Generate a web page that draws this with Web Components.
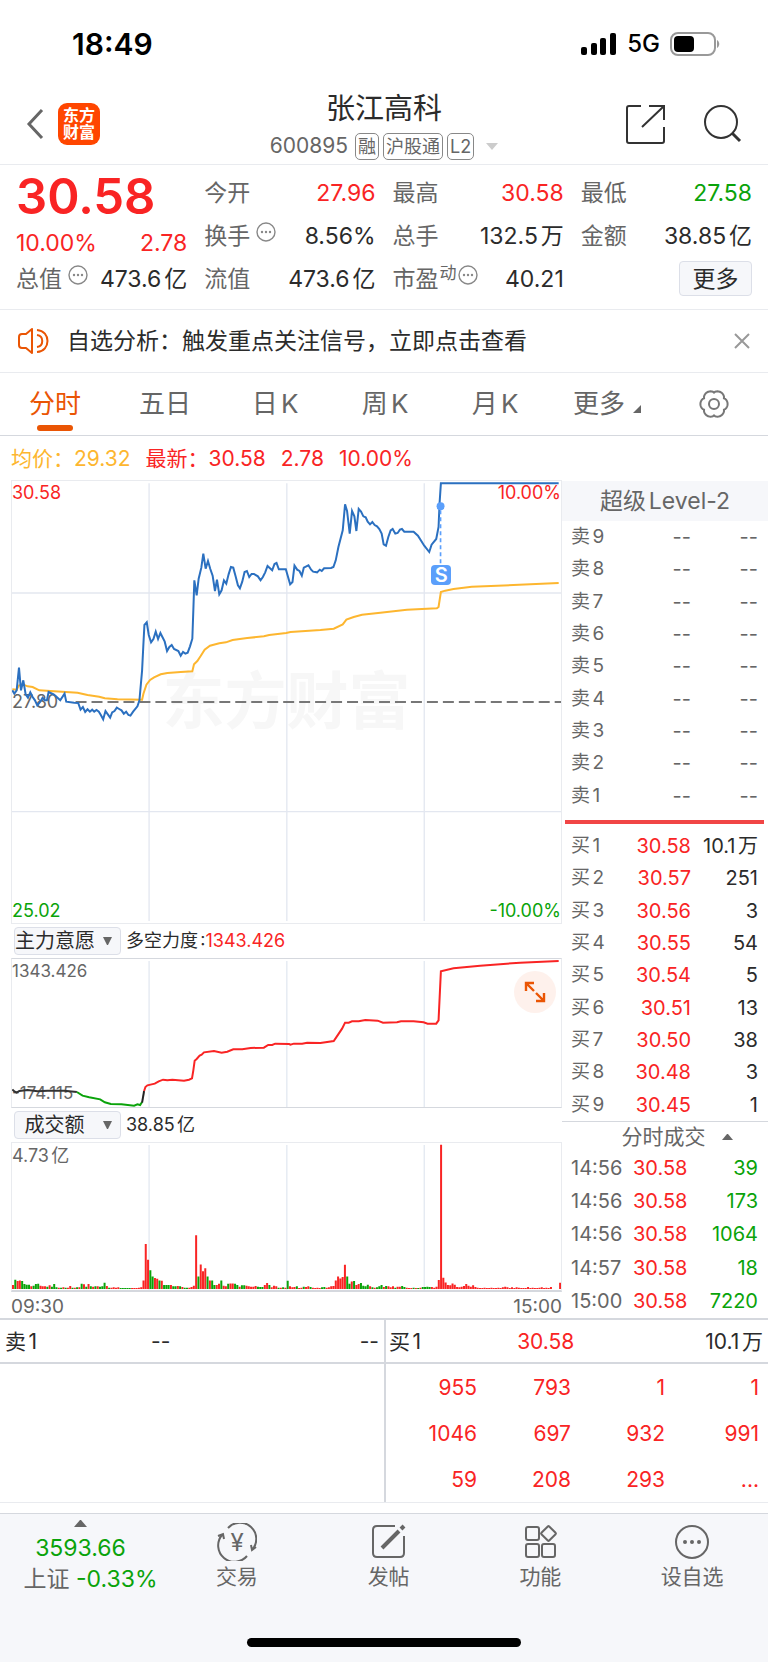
<!DOCTYPE html>
<html lang="zh-CN">
<head>
<meta charset="utf-8">
<meta name="viewport" content="width=device-width, initial-scale=1">
<title>张江高科 600895</title>
<style>
    :root {
        --red: #f92424;
        --green: #0aa30a;
        --orange: #ea5504;
        --yellow: #fdb62f;
        --ink: #2b2b2b;
        --grey: #666;
        --line: #e9ebef;
        --line-dark: #d5d8de;
        --panel: #f6f7fa;
    }
    body {
        margin: 0;
        background: #fff;
        color: var(--ink);
        font-family: Inter, "Noto Sans CJK SC", sans-serif;
        font-size: 23px;
        line-height: 32px;
        text-autospace: normal;
    }
</style>
</head>
<body>
<stock-app></stock-app>

<script>
class StatusBar extends HTMLElement {

    constructor() {
        super();
        this.attachShadow({mode: 'open'});
        this.render();
    }

    render() {
        this.shadowRoot.innerHTML = `
        <style>
            :host {
                display: flex;
                align-items: center;
                justify-content: space-between;
                height: 88px;
                padding: 0 48px 0 72px;
                color: #000;
            }
            time { font-size: 30px; font-weight: 600; }
            .right { display: flex; align-items: center; gap: 10px; font-weight: 500; font-size: 24px; }
            svg { display: block; }
        </style>
        <time>18:49</time>
        <div class="right">
            <svg width="36" height="24" viewBox="0 0 36 24">
                <rect x="0" y="15" width="6" height="8" rx="2"/>
                <rect x="10" y="11" width="6" height="12" rx="2"/>
                <rect x="19" y="6" width="6" height="17" rx="2"/>
                <rect x="29" y="1" width="6" height="22" rx="2"/>
            </svg>
            <span>5G</span>
            <svg width="50" height="24" viewBox="0 0 50 24">
                <rect x="1" y="1" width="44" height="22" rx="7" fill="none" stroke="#999" stroke-width="2"/>
                <rect x="4" y="4" width="20" height="16" rx="4"/>
                <path d="M47 8c3 2 3 6 0 8z" fill="#999"/>
            </svg>
        </div>`;
    }
}
customElements.define('status-bar', StatusBar);


class StockHeader extends HTMLElement {

    constructor() {
        super();
        this.attachShadow({mode: 'open'});
        this.render();
    }

    render() {
        this.shadowRoot.innerHTML = `
        <style>
            :host {
                display: grid;
                grid-template-columns: 1fr auto 1fr;
                align-items: center;
                height: 76px;
                padding: 0 26px;
                border-bottom: 1px solid var(--line);
            }
            button, a { background: none; border: 0; padding: 0; color: inherit; display: block; text-decoration: none; }
            svg { display: block; fill: none; }
            .left, .tools { display: flex; align-items: center; margin-bottom: 4px; }
            .left { gap: 14px; }
            .tools { justify-content: flex-end; gap: 37px; }
            .logo {
                width: 42px;
                height: 42px;
                box-sizing: border-box;
                padding-top: 4px;
                border-radius: 9px;
                background: #ff4600;
                color: #fff;
                text-align: center;
                font-size: 16px;
                font-weight: 700;
                line-height: 17px;
            }
            .mid { text-align: center; }
            h1 { margin: 0; font-size: 29px; font-weight: 400; line-height: 40px; }
            .sub { display: flex; align-items: center; justify-content: center; gap: 4px; color: var(--grey); font-size: 21px; line-height: 34px; }
            .sub i {
                font-style: normal;
                font-size: 18px;
                line-height: 25px;
                padding: 0 2px;
                border: 1px solid #888;
                border-radius: 5px;
            }
            .sub i:first-of-type { margin-left: 3px; }
            .sub svg { margin-left: 8px; }
        </style>
        <div class="left">
            <button type="button" aria-label="返回">
                <svg width="18" height="32" viewBox="0 0 18 32"><path d="M16 2L3 16l13 14" stroke="#666" stroke-width="3"/></svg>
            </button>
            <a class="logo" href="#home">东方<br>财富</a>
        </div>
        <div class="mid">
            <h1>张江高科</h1>
            <div class="sub"><span>600895</span><i>融</i><i>沪股通</i><i>L2</i><svg width="12" height="7" viewBox="0 0 12 7"><path d="M0 0h12L6 7z" fill="#ccc"/></svg></div>
        </div>
        <div class="tools">
            <button type="button" aria-label="分享">
                <svg width="40" height="40" viewBox="0 0 40 40" stroke="#333" stroke-width="2">
                    <path d="M16 2H4q-2 0-2 2v33q0 2 2 2h33q2 0 2-2V23M24 2h15v14M17 23L38 3"/>
                </svg>
            </button>
            <button type="button" aria-label="搜索">
                <svg width="40" height="40" viewBox="0 0 40 40" stroke="#333" stroke-width="2">
                    <circle cx="19" cy="18" r="16"/><path d="M30 29l8 8" stroke-width="3"/>
                </svg>
            </button>
        </div>`;
    }
}
customElements.define('stock-header', StockHeader);


// one label / value pair, the label may carry a small hint icon
class QuoteCell extends HTMLElement {

    constructor() {
        super();
        this.attachShadow({mode: 'open'});
        this.render();
    }

    render() {
        const hint = this.hasAttribute('hint')
            ? '<svg width="20" height="20" viewBox="0 0 20 20"><circle cx="10" cy="10" r="9" fill="none" stroke="#888" stroke-width="1.4"/><circle cx="6" cy="10" r="1.2"/><circle cx="10" cy="10" r="1.2"/><circle cx="14" cy="10" r="1.2"/></svg>'
            : '';
        const sup = this.getAttribute('sup') || '';
        this.shadowRoot.innerHTML = `
        <style>
            :host { display: flex; justify-content: space-between; align-items: center; white-space: nowrap; }
            .label { display: flex; color: var(--grey); }
            small { font-size: 17px; line-height: 20px; margin-left: 1px; }
            svg { display: block; margin-left: 6px; margin-top: 2px; fill: #888; }
            small + svg { margin-left: 1px; }
        </style>
        <span class="label">${this.getAttribute('label')}${sup ? '<small>' + sup + '</small>' : ''}${hint}</span>
        <slot></slot>`;
    }
}
customElements.define('quote-cell', QuoteCell);


class QuoteBoard extends HTMLElement {

    constructor() {
        super();
        this.attachShadow({mode: 'open'});
        this.render();
    }

    render() {
        this.shadowRoot.innerHTML = `
        <style>
            :host {
                display: grid;
                grid-template-columns: repeat(4, 1fr);
                grid-template-rows: repeat(3, 43px);
                column-gap: 17px;
                padding: 6px 16px 9px;
                border-bottom: 1px solid var(--line);
            }
            .price {
                grid-row: span 2;
                color: var(--red);
            }
            .price b { display: block; font-size: 49px; font-weight: 600; line-height: 52px; white-space: nowrap; }
            .price div { display: flex; justify-content: space-between; line-height: 40px; }
            .up { color: var(--red); }
            .down { color: var(--green); }
            button {
                justify-self: end;
                align-self: center;
                width: 73px;
                height: 35px;
                padding: 0;
                font: inherit;
                line-height: 32px;
                color: inherit;
                background: var(--panel);
                border: 1px solid #dcdfe8;
                border-radius: 4px;
            }
        </style>
        <div class="price"><b>30.58</b><div><span>10.00%</span><span>2.78</span></div></div>
        <quote-cell label="今开"><span class="up">27.96</span></quote-cell>
        <quote-cell label="最高"><span class="up">30.58</span></quote-cell>
        <quote-cell label="最低"><span class="down">27.58</span></quote-cell>
        <quote-cell label="换手" hint>8.56%</quote-cell>
        <quote-cell label="总手">132.5万</quote-cell>
        <quote-cell label="金额">38.85亿</quote-cell>
        <quote-cell label="总值" hint>473.6亿</quote-cell>
        <quote-cell label="流值">473.6亿</quote-cell>
        <quote-cell label="市盈" sup="动" hint>40.21</quote-cell>
        <button type="button">更多</button>`;
    }
}
customElements.define('quote-board', QuoteBoard);


class NoticeBar extends HTMLElement {

    constructor() {
        super();
        this.attachShadow({mode: 'open'});
        this.render();
    }

    render() {
        this.shadowRoot.innerHTML = `
        <style>
            :host {
                display: flex;
                align-items: center;
                height: 62px;
                padding: 0 17px;
                border-bottom: 1px solid var(--line);
            }
            svg { display: block; fill: none; }
            a { flex: 1; margin-left: 18px; color: inherit; text-decoration: none; }
            button { background: none; border: 0; padding: 0; }
        </style>
        <svg width="32" height="28" viewBox="0 0 32 28" stroke="#ea5504" stroke-width="2">
            <path d="M15 2v24l-6-5H5q-3 0-3-3v-8q0-3 3-3h4z" stroke-linejoin="round"/>
            <path d="M20 8c7 1 7 11 0 12M20 3c14 1 14 21 0 22"/>
        </svg>
        <a href="#analysis">自选分析：触发重点关注信号，立即点击查看</a>
        <button type="button" aria-label="关闭">
            <svg width="18" height="18" viewBox="0 0 18 18" stroke="#999" stroke-width="2"><path d="M2 2l14 14M16 2L2 16"/></svg>
        </button>`;
    }
}
customElements.define('notice-bar', NoticeBar);


class PeriodTabs extends HTMLElement {

    constructor() {
        super();
        this.attachShadow({mode: 'open'});
        this.render();
    }

    // outline of the settings wheel: six broad bumps, narrow notches between them
    gear() {
        const pts = [];
        for (let a = 0; a < 360; a += 5) {
            const t = a * Math.PI / 180;
            const r = 11.4 + 2.2 * Math.pow(Math.abs(Math.cos(3 * t)), 0.7);
            pts.push((15 + r * Math.cos(t)).toFixed(2) + ',' + (15 + r * Math.sin(t)).toFixed(2));
        }
        return pts.join(' ');
    }

    render() {
        const tabs = ['分时', '五日', '日K', '周K', '月K'];
        this.shadowRoot.innerHTML = `
        <style>
            :host {
                display: grid;
                grid-template-columns: repeat(6, 1fr) 108px;
                height: 62px;
                border-bottom: 1px solid var(--line-dark);
            }
            button {
                position: relative;
                background: none;
                border: 0;
                padding: 0;
                font: inherit;
                font-size: 26px;
                color: var(--grey);
                white-space: nowrap;
                text-autospace: normal;
            }
            .on { color: var(--orange); }
            .on::after {
                content: "";
                position: absolute;
                left: calc(50% - 18px);
                bottom: 4px;
                width: 36px;
                height: 6px;
                border-radius: 3px;
                background: var(--orange);
            }
            .more { padding-left: 4px; }
            svg { fill: none; }
            .wheel { display: block; margin: auto; stroke-linejoin: round; }
            .corner { margin-left: 8px; }
        </style>
        ${tabs.map((t, i) => `<button type="button"${i === 0 ? ' class="on"' : ''}>${t}</button>`).join('')}
        <button type="button" class="more">更多<svg class="corner" width="8" height="8" viewBox="0 0 8 8"><path d="M8 0v8H0z" fill="#666"/></svg></button>
        <button type="button" aria-label="设置">
            <svg class="wheel" width="30" height="30" viewBox="0 0 30 30" stroke="#777" stroke-width="2"><polygon points="${this.gear()}"/><circle cx="15" cy="15" r="5"/></svg>
        </button>`;
    }
}
customElements.define('period-tabs', PeriodTabs);


class PriceChart extends HTMLElement {

    constructor() {
        super();
        this.attachShadow({mode: 'open'});
        this.render();
    }

    render() {
        const price = '34,660 40,670 47,660 54,592 60,660 67,630 74,672 81,682 88,666 95,680 102,690 109,705 118,694 125,682 132,690 138,690 143,665 158,672 165,678 178,690 191,670 196,694 220,697 232,698 239,718 246,710 253,725 260,717 267,724 274,718 280,724 287,719 294,724 300,734 307,747 314,722 321,732 328,742 334,726 341,722 348,712 355,716 362,720 369,730 376,724 383,734 389,736 397,724 410,708 416,690 424,600 428,520 431,464 438,456 444,494 451,516 458,506 465,484 472,506 479,488 485,500 492,514 499,542 506,530 513,524 520,536 533,542 540,556 547,545 554,550 561,547 568,528 575,505 578,420 581,330 588,375 594,325 602,292 608,250 615,295 622,272 629,296 636,316 643,362 649,328 656,372 663,360 670,330 677,340 684,312 691,290 698,292 705,318 712,345 718,354 725,334 732,305 739,302 746,320 753,311 760,311 772,318 780,330 787,320 794,306 801,287 815,300 822,281 828,278 835,297 856,297 862,318 869,342 876,335 882,286 890,298 897,302 904,316 910,292 924,285 932,298 938,304 950,306 958,298 964,302 971,294 992,293 999,290 1006,270 1014,230 1027,180 1034,102 1040,122 1048,190 1055,122 1062,138 1068,182 1075,116 1082,124 1089,138 1096,141 1102,154 1109,162 1116,155 1123,164 1130,168 1137,176 1144,190 1150,222 1157,226 1164,200 1171,180 1177,176 1185,190 1192,188 1199,178 1205,176 1212,184 1240,184 1253,196 1272,226 1287,245 1294,223 1308,206 1315,170 1318,100 1322,39 1676,39';
        const average = '34,657 47,658 54,645 68,643 80,648 95,650 115,660 160,663 230,667 260,674 295,679 312,684 350,687 424,688 428,670 437,643 448,629 460,621 480,612 500,608 540,605 575,603 580,582 590,572 600,557 612,538 628,526 656,519 676,516 696,509 740,503 790,498 806,494 857,488 870,485 960,479 1000,475 1027,462 1038,448 1060,440 1085,433 1140,427 1220,418 1310,414 1315,410 1322,365 1335,361 1360,356 1415,349 1540,344 1676,338';
        this.shadowRoot.innerHTML = `
        <style>
            :host {
                display: block;
                position: relative;
                height: 442px;
                border: 1px solid var(--line);
                font-size: 18px;
                line-height: 24px;
            }
            .mark {
                position: absolute;
                inset: 0 25% 0 25%;
                display: flex;
                align-items: center;
                justify-content: center;
                font-size: 62px;
                font-weight: 700;
                white-space: nowrap;
                color: #f7f7f7;
            }
            svg { position: absolute; inset: 0; width: 100%; height: 100%; fill: none; }
            .tag { position: absolute; }
            .t { top: 0; }
            .c { top: calc(50% - 12px); color: var(--grey); }
            .b { bottom: 0; }
            .l { left: 0; }
            .r { right: 0; }
            .up { color: var(--red); }
            .down { color: var(--green); }
            .sell {
                position: absolute;
                left: calc(78% - 9px);
                top: 84px;
                width: 20px;
                height: 20px;
                border-radius: 4px;
                background: #5b9ffb;
                color: #fff;
                font-size: 20px;
                font-weight: 600;
                line-height: 20px;
                text-align: center;
            }
        </style>
        <div class="mark">东方财富</div>
        <span class="tag c l">27.80</span>
        <svg viewBox="33 32 1650 1326" preserveAspectRatio="none">
            <path d="M445 39V1352M859 39V1352M1272 39V1352M33 368H1683M33 1024H1683" stroke="#e3e7f0" stroke-width="4"/>
            <path d="M224 695H1683" stroke="#777" stroke-width="6" stroke-dasharray="33 15"/>
            <polyline points="${average}" stroke="#fdb62f" stroke-width="6"/>
            <polyline points="${price}" stroke="#2b70c0" stroke-width="6"/>
            <path d="M1321 120V285" stroke="#5b9ffb" stroke-width="5" stroke-dasharray="12 9"/>
            <circle cx="1321" cy="108" r="12" fill="#5b9ffb"/>
        </svg>
        <span class="tag t l up">30.58</span>
        <span class="tag t r up">10.00%</span>
        <span class="tag b l down">25.02</span>
        <span class="tag b r down">-10.00%</span>
        <span class="sell">S</span>`;
    }
}
customElements.define('price-chart', PriceChart);


// title row of a sub chart: drop-down and current value
class IndicatorHead extends HTMLElement {

    constructor() {
        super();
        this.attachShadow({mode: 'open'});
        this.render();
    }

    render() {
        const name = this.getAttribute('name');
        this.shadowRoot.innerHTML = `
        <style>
            :host { display: flex; align-items: center; height: 34px; padding-left: 3px; font-size: 18px; }
            label { position: relative; display: block; margin-right: 5px; }
            select {
                appearance: none;
                display: block;
                width: 107px;
                height: 28px;
                padding: 0 26px 0 0;
                font: inherit;
                font-size: 20px;
                line-height: 26px;
                text-align: center;
                text-align-last: center;
                color: inherit;
                background: var(--panel);
                border: 1px solid #dcdfe8;
                border-radius: 4px;
            }
            svg { position: absolute; right: 9px; top: 10px; }
        </style>
        <label>
            <select aria-label="指标"><option>${name}</option></select>
            <svg width="9" height="8" viewBox="0 0 9 8"><path d="M0 0h9L5 8H4z" fill="#666"/></svg>
        </label>
        <slot></slot>`;
    }
}
customElements.define('indicator-head', IndicatorHead);


class ForceChart extends HTMLElement {

    constructor() {
        super();
        this.attachShadow({mode: 'open'});
        this.render();
    }

    render() {
        this.shadowRoot.innerHTML = `
        <style>
            :host {
                display: block;
                position: relative;
                height: 148px;
                border: 1px solid var(--line-dark);
                border-left-color: var(--line);
                border-right-color: var(--line);
                color: var(--grey);
                font-size: 17px;
                line-height: 24px;
            }
            svg { display: block; fill: none; }
            .plot { position: absolute; inset: 0; width: 100%; height: 100%; }
            .tag { position: absolute; left: 0; }
            .t { top: 0; }
            .b { bottom: 2px; }
            button {
                position: absolute;
                right: 5px;
                top: 12px;
                width: 42px;
                height: 42px;
                padding: 10px;
                border: 0;
                border-radius: 50%;
                background: #fef1ec;
            }
        </style>
        <span class="tag t">1343.426</span>
        <span class="tag b">-174.115</span>
        <svg class="plot" viewBox="33 116 1650 444" preserveAspectRatio="none">
            <path d="M445 122V560M859 122V560M1272 122V560" stroke="#e3e9f1" stroke-width="4"/>
            <g stroke-width="6">
                <polyline stroke="#333" points="34,507 40,513 47,517 55,512 80,509 110,513 140,511 190,511 228,515"/>
                <polyline stroke="#0aa30a" points="228,515 245,526 265,531 298,537 312,546 330,551 362,552 400,556 410,552 418,554 424,545"/>
                <polyline stroke="#222" points="424,547 430,512"/>
                <polyline stroke="#f92424" points="430,512 434,500 440,495 462,490 474,483 487,478 500,480 515,478 550,481 565,478 574,474 578,450 582,421 588,416 597,406 603,403 610,396 640,392 663,397 680,394 698,387 725,387 750,383 790,382 803,374 815,374 824,370 866,371 870,373 880,370 905,370 920,367 960,368 1000,362 1015,340 1025,325 1034,307 1045,307 1055,303 1075,303 1095,299 1132,301 1148,307 1190,306 1202,303 1240,303 1270,306 1282,310 1308,310 1315,300 1322,153 1360,144 1440,136 1560,127 1676,122"/>
            </g>
        </svg>
        <button type="button" aria-label="展开">
            <svg width="22" height="22" viewBox="0 0 22 22" stroke="#ea5504" stroke-width="2.4"><path d="M2 10V2h8M2 2l8 8M20 12v8h-8M20 20l-8-8"/></svg>
        </button>`;
    }
}
customElements.define('force-chart', ForceChart);


class VolumeChart extends HTMLElement {

    constructor() {
        super();
        this.attachShadow({mode: 'open'});
        this.render();
    }

    // one bar per minute, below zero means a falling minute
    bars() {
        const data = [
            12,-28,24,26,-24,-15,-13,-13,8,-10, -15,-16,10,8,8,-7,11,-7,-15,-5,
            4,-4,5,-4,4,9,-4,4,-5,5, -16,14,-7,15,-8,7,-8,8,-7,-8,
            -19,9,-4,4,5,4,5,-3,-3,-3, -3,-3,3,3,3,4,5,26,136,88,
            -57,-38,33,31,-26,25,-12,-12,-12,12, -8,-8,9,-8,6,-4,-4,4,6,10,
            162,-38,74,54,63,-38,26,-26,-12,12, 16,-26,10,8,-16,17,17,-16,-12,7,
            -11,-11,10,8,7,7,9,-7,-6,-6, 12,18,-12,5,10,8,-4,4,-5,4,
            -25,8,5,6,-8,3,4,-7,6,8, -6,4,3,4,3,-5,-6,4,5,8,
            9,26,38,32,36,73,-38,-16,23,-24, 12,15,-18,-10,-8,-13,8,-5,4,-5,
            -8,-12,6,-9,8,5,8,-4,7,7, -9,-6,4,3,3,-4,3,-3,4,-6,
            -6,-7,-6,6,4,7,27,436,34,20, 12,11,17,13,6,5,7,9,15,10,
            7,11,6,4,3,3,4,3,3,4, 3,3,4,3,5,7,5,3,5,3,
            5,4,3,3,3,6,3,4,3,3, 4,5,3,4,3,6,0,0,0,19
        ];
        const path = sign => data.map((v, i) => v * sign > 0
            ? `M${(36 + i * 6.88).toFixed(1)} 1109v${-Math.abs(v)}` : '').join('');
        return `<path d="${path(1)}" stroke="#f92424"/><path d="${path(-1)}" stroke="#0aa30a"/>`;
    }

    render() {
        this.shadowRoot.innerHTML = `
        <style>
            :host { display: block; color: var(--grey); font-size: 19px; }
            .box {
                position: relative;
                height: 147px;
                border: 1px solid var(--line);
                border-bottom: 2px solid var(--line-dark);
            }
            svg { position: absolute; inset: 0; width: 100%; height: 100%; }
            .tag { position: absolute; left: 0; top: 0; line-height: 26px; font-size: 18px; }
            .axis { display: flex; justify-content: space-between; height: 26px; line-height: 29px; }
        </style>
        <div class="box">
            <svg viewBox="33 668 1650 444" preserveAspectRatio="none">
                <path d="M445 674V1111M859 674V1111M1272 674V1111" stroke="#e3e9f1" stroke-width="4"/>
                <g stroke-width="6">${this.bars()}</g>
            </svg>
            <span class="tag">4.73亿</span>
        </div>
        <div class="axis"><span>09:30</span><span>15:00</span></div>`;
    }
}
customElements.define('volume-chart', VolumeChart);


class ChartPanel extends HTMLElement {

    constructor() {
        super();
        this.attachShadow({mode: 'open'});
        this.render();
    }

    render() {
        this.shadowRoot.innerHTML = `
        <style>
            :host { display: block; padding-left: 11px; }
            .up { color: var(--red); }
        </style>
        <price-chart></price-chart>
        <indicator-head name="主力意愿"><span>多空力度:<span class="up">1343.426</span></span></indicator-head>
        <force-chart></force-chart>
        <indicator-head name="成交额">38.85亿</indicator-head>
        <volume-chart></volume-chart>`;
    }
}
customElements.define('chart-panel', ChartPanel);


class OrderBook extends HTMLElement {

    constructor() {
        super();
        this.attachShadow({mode: 'open'});
        this.render();
    }

    render() {
        const sells = [9, 8, 7, 6, 5, 4, 3, 2, 1].map(n => ['卖' + n, '--', '--']);
        const buys = [
            ['买1', '30.58', '10.1万'],
            ['买2', '30.57', '251'],
            ['买3', '30.56', '3'],
            ['买4', '30.55', '54'],
            ['买5', '30.54', '5'],
            ['买6', '30.51', '13'],
            ['买7', '30.50', '38'],
            ['买8', '30.48', '3'],
            ['买9', '30.45', '1']
        ];
        const deals = [
            ['14:56', '30.58', '39'],
            ['14:56', '30.58', '173'],
            ['14:56', '30.58', '1064'],
            ['14:57', '30.58', '18'],
            ['15:00', '30.58', '7220']
        ];
        const table = (rows, name) => `<table class="${name}">${rows.map(r =>
            `<tr><th scope="row">${r[0]}</th><td>${r[1]}</td><td>${r[2]}</td></tr>`).join('')}</table>`;

        this.shadowRoot.innerHTML = `
        <style>
            :host { display: block; font-size: 19px; line-height: 24px; }
            h2 { margin: 0; font-weight: 400; color: var(--grey); text-align: center; }
            .level { margin: 1px 0 0; font-size: 23px; line-height: 40px; background: var(--panel); }
            table { width: 100%; border-collapse: collapse; table-layout: fixed; text-autospace: normal; }
            th, td { padding: 0; font-weight: 400; white-space: nowrap; }
            th { width: 62px; padding-left: 9px; text-align: left; color: var(--grey); }
            td { text-align: right; font-size: 20px; }
            td:nth-child(2) { width: 58px; color: var(--red); }
            td:nth-child(3) { padding-right: 10px; }
            .sells, .buys { height: 291px; }
            .sells td { color: var(--grey); }
            .sells td:nth-child(2) { color: var(--grey); }
            .deals { height: 167px; }
            .deals th { font-size: 20px; }
            .deals td:nth-child(2) { width: 52px; }
            .deals td:nth-child(3) { color: var(--green); }
            hr { margin: 8px 4px 6px 3px; border: 0; height: 4px; background: #f14545; }
            .list { display: flex; justify-content: center; align-items: center; gap: 16px; padding-left: 24px; font-size: 21px; line-height: 29px; border-top: 1px solid var(--line-dark); }
        </style>
        <h2 class="level">超级Level-2</h2>
        ${table(sells, 'sells')}
        <hr>
        ${table(buys, 'buys')}
        <h2 class="list">分时成交<svg width="11" height="6" viewBox="0 0 11 6"><path d="M0 6L5 0h1l5 6z" fill="#666"/></svg></h2>
        ${table(deals, 'deals')}`;
    }
}
customElements.define('order-book', OrderBook);


class QueuePanel extends HTMLElement {

    constructor() {
        super();
        this.attachShadow({mode: 'open'});
        this.render();
    }

    render() {
        const queue = [
            ['955', '793', '1', '1'],
            ['1046', '697', '932', '991'],
            ['59', '208', '293', '...']
        ];
        this.shadowRoot.innerHTML = `
        <style>
            :host {
                display: grid;
                grid-template-columns: 1fr 1fr;
                border-top: 2px solid var(--line-dark);
                border-bottom: 1px solid var(--line);
                margin-bottom: 10px;
                font-size: 21px;
            }
            section + section { box-shadow: inset 2px 0 var(--line-dark); }
            .top {
                display: grid;
                grid-template-columns: 1fr 1fr 1fr;
                line-height: 40px;
                padding: 2px 5px 0;
                border-bottom: 2px solid var(--line-dark);
            }
            .top span + span { text-align: right; }
            .top span:nth-child(2) { padding-right: 84px; margin-left: -84px; }
            .buy .top span:nth-child(2) { padding-right: 64px; color: var(--red); }
            table { width: 100%; border-collapse: collapse; table-layout: fixed; color: var(--red); }
            td { padding: 2px 9px 0 0; height: 44px; text-align: right; }
            td:first-child { width: 93px; }
        </style>
        <section><div class="top"><span>卖1</span><span>--</span><span>--</span></div></section>
        <section class="buy">
            <div class="top"><span>买1</span><span>30.58</span><span>10.1万</span></div>
            <table>${queue.map(r => `<tr>${r.map(v => `<td>${v}</td>`).join('')}</tr>`).join('')}</table>
        </section>`;
    }
}
customElements.define('queue-panel', QueuePanel);


class ToolButton extends HTMLElement {

    constructor() {
        super();
        this.attachShadow({mode: 'open'});
        this.render();
    }

    render() {
        this.shadowRoot.innerHTML = `
        <style>
            :host { display: block; }
            button {
                display: flex;
                flex-direction: column;
                align-items: center;
                width: 100%;
                padding: 9px 0 0;
                border: 0;
                background: none;
                font: inherit;
                font-size: 21px;
                line-height: 32px;
                color: var(--grey);
            }
            ::slotted(svg) { display: block; fill: none; stroke: #666; stroke-width: 2px; }
        </style>
        <button type="button"><slot></slot><span>${this.getAttribute('label')}</span></button>`;
    }
}
customElements.define('tool-button', ToolButton);


class ToolBar extends HTMLElement {

    constructor() {
        super();
        this.attachShadow({mode: 'open'});
        this.render();
    }

    render() {
        this.shadowRoot.innerHTML = `
        <style>
            :host { display: block; flex: 1; background: var(--panel); border-top: 1px solid var(--line-dark); }
            nav { display: grid; grid-template-columns: 161px repeat(4, 1fr); height: 124px; }
            .index { display: flex; flex-direction: column; align-items: center; padding-top: 6px; color: var(--grey); text-decoration: none; white-space: nowrap; }
            .index svg { display: block; margin-bottom: 6px; }
            .index b { font-weight: 400; color: var(--green); line-height: 30px; }
            .index span { margin-left: 20px; }
            .home { width: 274px; height: 9px; margin: 0 auto 15px; border-radius: 5px; background: #000; }
            text { font-family: Inter, sans-serif; font-size: 24px; fill: #666; stroke: none; }
        </style>
        <nav>
            <a class="index" href="#index">
                <svg width="13" height="7" viewBox="0 0 13 7"><path d="M0 7L6 0h1l6 7z" fill="#666"/></svg>
                <b>3593.66</b>
                <span>上证 <b>-0.33%</b></span>
            </a>
            <tool-button label="交易">
                <svg width="40" height="38" viewBox="0 0 40 38">
                    <path d="M11 5A16 16 0 0 1 35 27M30 33A16 16 0 0 1 5 12M1 13l5-2 1 5M39 24l-4 3-1-5"/>
                    <text x="20" y="28" text-anchor="middle">¥</text>
                </svg>
            </tool-button>
            <tool-button label="发帖">
                <svg width="38" height="38" viewBox="0 0 38 38">
                    <path d="M25 3H7Q3 3 3 7v23q0 4 4 4h23q4 0 4-4V13"/>
                    <path d="M12 25L29 8M31 6l3-3" stroke-width="4"/>
                </svg>
            </tool-button>
            <tool-button label="功能">
                <svg width="38" height="38" viewBox="0 0 38 38">
                    <rect x="5" y="4" width="13" height="13" rx="2"/>
                    <rect x="5" y="21" width="13" height="13" rx="2"/>
                    <rect x="21" y="21" width="13" height="13" rx="2"/>
                    <rect x="22" y="5" width="11" height="11" rx="1" transform="rotate(45 27.5 10.5)"/>
                </svg>
            </tool-button>
            <tool-button label="设自选">
                <svg width="38" height="38" viewBox="0 0 38 38">
                    <circle cx="19" cy="19" r="16"/>
                    <path d="M12 19h0M19 19h0M26 19h0" stroke-width="4" stroke-linecap="round"/>
                </svg>
            </tool-button>
        </nav>
        <div class="home"></div>`;
    }
}
customElements.define('tool-bar', ToolBar);


class StockApp extends HTMLElement {

    constructor() {
        super();
        this.attachShadow({mode: 'open'});
        this.render();
    }

    render() {
        this.shadowRoot.innerHTML = `
        <style>
            :host { display: flex; flex-direction: column; min-height: 100vh; }
            .info { display: flex; height: 44px; padding-left: 11px; font-size: 21px; line-height: 46px; gap: 15px; color: var(--red); white-space: nowrap; }
            .info .avg { color: var(--yellow); }
            .body { display: grid; grid-template-columns: minmax(0, 1fr) 206px; }
        </style>
        <status-bar></status-bar>
        <stock-header></stock-header>
        <quote-board></quote-board>
        <notice-bar></notice-bar>
        <period-tabs></period-tabs>
        <div class="info"><span class="avg">均价：29.32</span><span>最新：30.58</span><span>2.78</span><span>10.00%</span></div>
        <div class="body">
            <chart-panel></chart-panel>
            <order-book></order-book>
        </div>
        <queue-panel></queue-panel>
        <tool-bar></tool-bar>`;
    }
}
customElements.define('stock-app', StockApp);
</script>
</body>
</html>
